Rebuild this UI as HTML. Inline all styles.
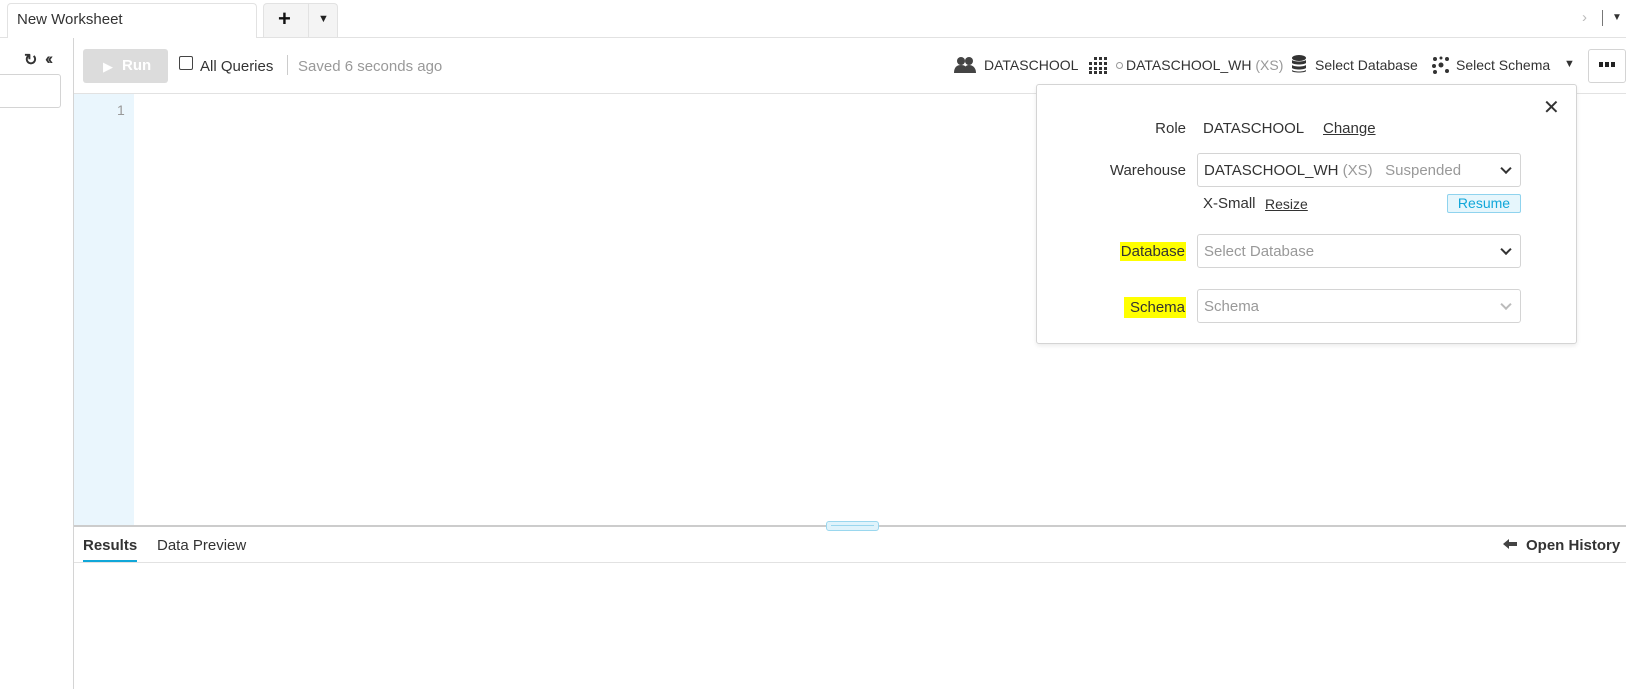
<!DOCTYPE html>
<html><head><meta charset="utf-8"><style>
*{box-sizing:border-box;margin:0;padding:0}
body{width:1626px;height:689px;overflow:hidden;background:#fff;font-family:"Liberation Sans",sans-serif;color:#333;position:relative;font-size:15px}
.a{position:absolute;white-space:nowrap}
.box{position:absolute;border:1px solid #d4d4d4;border-radius:3px;background:#fff}
.chev{position:absolute;right:10px;top:50%;width:8px;height:8px;border-right:2.5px solid #333;border-bottom:2.5px solid #333;transform:translateY(-70%) rotate(45deg)}
.hl{background:#ffff00}
</style></head><body>
<!-- tab bar -->
<div class="a" style="left:0;top:37px;width:1626px;height:1px;background:#e2e2e2"></div>
<div class="a" style="left:7px;top:3px;width:250px;height:35px;border:1px solid #e2e2e2;border-bottom:none;border-radius:4px 4px 0 0;background:#fff"></div>
<div class="a" style="left:17px;top:11px;font-size:15px;color:#333">New Worksheet</div>
<div class="a" style="left:263px;top:3px;width:75px;height:34px;border:1px solid #e2e2e2;border-bottom:none;border-radius:4px 4px 0 0;background:#f4f4f4"></div>
<div class="a" style="left:308px;top:4px;width:1px;height:33px;background:#e2e2e2"></div>
<div class="a" style="left:278px;top:6px;font-size:22px;font-weight:bold;color:#111">+</div>
<div class="a" style="left:318px;top:13px;font-size:11px;color:#222">▼</div>
<div class="a" style="left:1582px;top:9px;font-size:15px;color:#bbb">›</div>
<div class="a" style="left:1602px;top:10px;width:1px;height:16px;background:#777"></div>
<div class="a" style="left:1612px;top:12px;font-size:10px;color:#333">▼</div>
<!-- left panel -->
<div class="a" style="left:73px;top:38px;width:1px;height:651px;background:#d4d4d4"></div>
<div class="a" style="left:24px;top:50px;font-size:16px;font-weight:bold;color:#333">↻</div>
<div class="a" style="left:45px;top:49px;font-size:17px;font-weight:bold;color:#333;letter-spacing:-3px">‹‹</div>
<div class="a" style="left:-5px;top:74px;width:66px;height:34px;border:1px solid #d4d4d4;border-radius:3px"></div>
<!-- toolbar -->
<div class="a" style="left:83px;top:49px;width:85px;height:34px;background:#dcdcdc;border-radius:3px"></div>
<div class="a" style="left:103px;top:59px;font-size:13px;color:#fff">▶</div>
<div class="a" style="left:122px;top:57px;font-size:15px;font-weight:bold;color:#fff">Run</div>
<div class="a" style="left:179px;top:56px;width:14px;height:14px;border:1.5px solid #444;border-radius:2px"></div>
<div class="a" style="left:200px;top:58px;font-size:15px;color:#333">All Queries</div>
<div class="a" style="left:287px;top:55px;width:1px;height:20px;background:#ccc"></div>
<div class="a" style="left:298px;top:58px;font-size:15px;color:#999">Saved 6 seconds ago</div>
<svg class="a" style="left:954px;top:56px" width="22" height="18" viewBox="0 0 22 18"><circle cx="7" cy="5" r="4" fill="#444"/><path d="M0 17c0-6 3-8 7-8s7 2 7 8z" fill="#444"/><circle cx="15" cy="5" r="4" fill="#444"/><path d="M10 17c0-6 2-8 5-8s7 2 7 8z" fill="#444"/></svg>
<div class="a" style="left:984px;top:57px;font-size:14px;color:#333">DATASCHOOL</div>
<svg class="a" style="left:1089px;top:56px" width="20" height="18" viewBox="0 0 20 18"><g fill="#333"><rect x="0" y="6" width="3" height="3"/><rect x="0" y="11" width="3" height="3"/><rect x="5" y="1" width="3" height="3"/><rect x="5" y="6" width="3" height="3"/><rect x="5" y="11" width="3" height="3"/><rect x="5" y="15" width="3" height="3"/><rect x="10" y="1" width="3" height="3"/><rect x="10" y="6" width="3" height="3"/><rect x="10" y="11" width="3" height="3"/><rect x="10" y="15" width="3" height="3"/><rect x="15" y="1" width="3" height="3"/><rect x="15" y="6" width="3" height="3"/><rect x="15" y="11" width="3" height="3"/><rect x="15" y="15" width="3" height="3"/><rect x="0" y="15" width="3" height="3"/></g></svg>
<div class="a" style="left:1116px;top:62px;width:7px;height:7px;border:1px solid #999;border-radius:50%"></div>
<div class="a" style="left:1126px;top:57px;font-size:14px;color:#333">DATASCHOOL_WH <span style="color:#999">(XS)</span></div>
<svg class="a" style="left:1292px;top:55px" width="14" height="19" viewBox="0 0 14 19"><g fill="#333"><ellipse cx="7" cy="3" rx="7" ry="3"/><path d="M0 5c2 2 12 2 14 0v3c-2 2-12 2-14 0z"/><path d="M0 10c2 2 12 2 14 0v3c-2 2-12 2-14 0z"/><path d="M0 15c2 2 12 2 14 0v1c0 2-14 2-14 0z"/></g></svg>
<div class="a" style="left:1315px;top:57px;font-size:14px;color:#333">Select Database</div>
<svg class="a" style="left:1432px;top:56px" width="18" height="18" viewBox="0 0 18 18"><g fill="#333"><circle cx="9" cy="9" r="2.5"/><circle cx="3" cy="3" r="2"/><circle cx="15" cy="3" r="2"/><circle cx="2" cy="10" r="2"/><circle cx="3" cy="16" r="2"/><circle cx="15" cy="15" r="2"/><circle cx="9" cy="2" r="1.5"/></g></svg>
<div class="a" style="left:1456px;top:57px;font-size:14px;color:#333">Select Schema</div>
<div class="a" style="left:1564px;top:58px;font-size:11px;color:#333">▼</div>
<div class="a" style="left:1588px;top:49px;width:38px;height:34px;border:1px solid #d4d4d4;border-radius:3px"></div>
<svg class="a" style="left:1599px;top:62px" width="16" height="6" viewBox="0 0 16 6"><g fill="#222"><rect x="0" y="0" width="4" height="5"/><rect x="6" y="0" width="4" height="5"/><rect x="12" y="0" width="4" height="5"/></g></svg>
<div class="a" style="left:74px;top:93px;width:1552px;height:1px;background:#e2e2e2"></div>
<!-- editor -->
<div class="a" style="left:74px;top:94px;width:60px;height:432px;background:#eaf6fd"></div>
<div class="a" style="left:117px;top:102px;font-size:14px;color:#999">1</div>
<div class="a" style="left:74px;top:525px;width:1552px;height:2px;background:#ccc"></div>
<div class="a" style="left:826px;top:521px;width:53px;height:10px;border:1px solid #9ad7ee;border-radius:3px;background:#dff3fb"></div>
<div class="a" style="left:831px;top:525px;width:43px;height:1px;background:#9ad7ee"></div>
<!-- results -->
<div class="a" style="left:83px;top:537px;font-size:15px;font-weight:bold;color:#333">Results</div>
<div class="a" style="left:157px;top:537px;font-size:15px;color:#333">Data Preview</div>
<div class="a" style="left:83px;top:560px;width:54px;height:2px;background:#11a7d9"></div>
<div class="a" style="left:74px;top:562px;width:1552px;height:1px;background:#e2e2e2"></div>
<svg class="a" style="left:1503px;top:539px" width="14" height="10" viewBox="0 0 14 10"><path d="M0 5L6 0V3H14V7H6V10Z" fill="#444"/></svg>
<div class="a" style="left:1526px;top:537px;font-size:15px;font-weight:bold;color:#333">Open History</div>
<!-- popup -->
<div class="a" style="left:1036px;top:84px;width:541px;height:260px;border:1px solid #d4d4d4;border-radius:3px;background:#fff;box-shadow:0 2px 4px rgba(0,0,0,.08)"></div>
<div class="a" style="left:1543px;top:95px;font-size:20px;color:#333">✕</div>
<div class="a" style="right:440px;top:120px;font-size:15px">Role</div>
<div class="a" style="left:1203px;top:120px;font-size:15px">DATASCHOOL</div>
<div class="a" style="left:1323px;top:120px;font-size:15px;text-decoration:underline">Change</div>
<div class="a" style="right:440px;top:162px;font-size:15px">Warehouse</div>
<div class="box" style="left:1197px;top:153px;width:324px;height:34px"><div class="a" style="left:6px;top:8px;font-size:15px">DATASCHOOL_WH <span style="color:#999">(XS)&nbsp;&nbsp; Suspended</span></div><div class="chev"></div></div>
<div class="a" style="left:1203px;top:195px;font-size:15px">X-Small</div>
<div class="a" style="left:1265px;top:196px;font-size:14px;text-decoration:underline">Resize</div>
<div class="a" style="left:1447px;top:194px;width:74px;height:19px;border:1px solid #8fd3ee;background:#e6f6fc;border-radius:2px;color:#11a7d9;font-size:14px;text-align:center;line-height:17px">Resume</div>
<div class="a hl" style="right:440px;top:242px;font-size:15px;padding:1px 1px">Database</div>
<div class="box" style="left:1197px;top:234px;width:324px;height:34px"><div class="a" style="left:6px;top:8px;font-size:15px;color:#999">Select Database</div><div class="chev"></div></div>
<div class="a hl" style="right:440px;top:297px;font-size:15px;padding:2px 1px 2px 6px">Schema</div>
<div class="box" style="left:1197px;top:289px;width:324px;height:34px"><div class="a" style="left:6px;top:8px;font-size:15px;color:#999">Schema</div><div class="chev" style="border-color:#bbb"></div></div>
</body></html>
